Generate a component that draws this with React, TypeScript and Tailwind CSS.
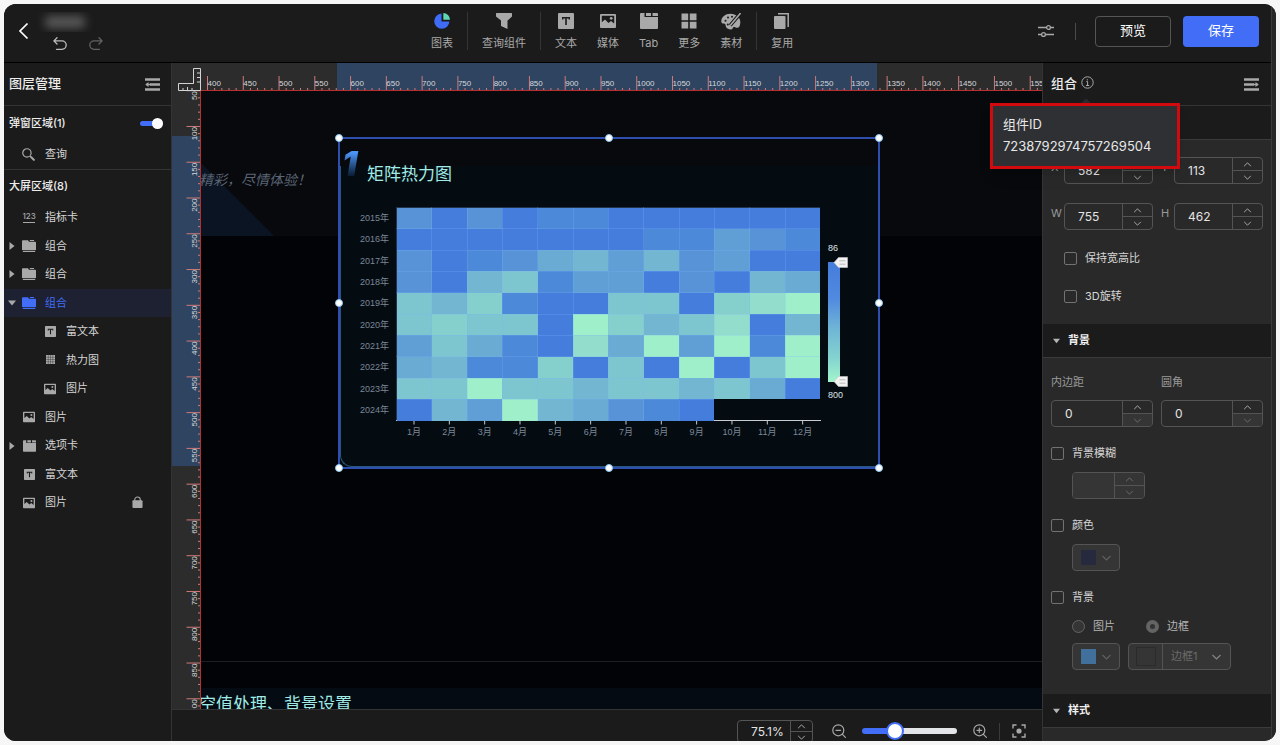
import React, { useState } from "react";
import clsx from "clsx";

type IconProps = { className?: string };

const TextIcon = ({ className }: IconProps) => (
  <svg viewBox="0 0 16 16" className={className} fill="currentColor" aria-hidden="true">
    <path fillRule="evenodd" d="M1 0h14a1 1 0 0 1 1 1v14a1 1 0 0 1-1 1H1a1 1 0 0 1-1-1V1a1 1 0 0 1 1-1Zm3 4v2.6h1.4V5.500h1.800V12h1.600V5.500h1.800v1.100H12V4Z" />
  </svg>
);

const PictureIcon = ({ className }: IconProps) => (
  <svg viewBox="0 0 16 16" className={className} fill="currentColor" aria-hidden="true">
    <path fillRule="evenodd" d="M1 1h14a1 1 0 0 1 1 1v12a1 1 0 0 1-1 1H1a1 1 0 0 1-1-1V2a1 1 0 0 1 1-1Zm.8 1.800v6.400L5 6.500l3.500 3.500L11 8l3.200 2.600V2.800Z" />
    <circle cx="11.200" cy="5.300" r="1.400" />
  </svg>
);

const TabIcon = ({ className }: IconProps) => (
  <svg viewBox="0 0 18 16" className={className} fill="currentColor" aria-hidden="true">
    <path d="M0 1a1 1 0 0 1 1-1h3.500v4H18v11a1 1 0 0 1-1 1H1a1 1 0 0 1-1-1ZM6 0h5v3H6Zm6.500 0H17a1 1 0 0 1 1 1v2h-5.500Z" />
  </svg>
);

const FolderIcon = ({ className }: IconProps) => (
  <svg viewBox="0 0 14 12" className={className} fill="currentColor" aria-hidden="true">
    <path d="M0 1a.8.8 0 0 1 .8-.8H6l1 1.600h6.200a.8.8 0 0 1 .8.8V10H0ZM7.500 0h4.500v1H8.200ZM.8 10.800h12.400V12H.8Z" />
  </svg>
);

const PieIcon = ({ className }: IconProps) => (
  <svg viewBox="0 0 16 16" className={className} aria-hidden="true">
    <path d="M7.500.6A7.600 7.600 0 1 0 15.400 8.500H7.500Z" fill="#3f6cf6" />
    <path d="M9.300 0A6.800 6.800 0 0 1 16 6.700H9.300Z" fill="#5fd6b4" />
  </svg>
);

const FunnelIcon = ({ className }: IconProps) => (
  <svg viewBox="0 0 16 16" className={className} fill="currentColor" aria-hidden="true">
    <path d="M.6 0h14.800a.6.6 0 0 1 .6.6v3L11.500 7.600V16L5 13V7.600L0 3.600v-3A.6.6 0 0 1 .6 0Z" />
  </svg>
);

const GridIcon = ({ className }: IconProps) => (
  <svg viewBox="0 0 16 16" className={className} fill="currentColor" aria-hidden="true">
    <path d="M.5.5h6.700v6.700H.5ZM8.800.5h6.700v6.700H8.800ZM.5 8.800h6.700v6.700H.5ZM8.800 8.800h6.700v6.700H8.800Z" />
  </svg>
);

const PaletteIcon = ({ className }: IconProps) => (
  <svg viewBox="0 0 20 17" className={className} aria-hidden="true">
    <path d="M9.500.8C4.300.8.3 4.100.3 8.400c0 1.900 1.200 2 2.500 2.100 1.700.1 1.700 1 1.900 2.500.3 2.200 2.600 3.600 5.300 3.600 1.700 0 1.500-1.600 2.300-2.300 1-.9 3.400 1.200 5.100.3 1.300-.8 1.900-3.200 1.900-5.600C19.300 4.500 15 .8 9.500.8Z" fill="currentColor" />
    <g fill="#1b1b1b">
      <circle cx="4.500" cy="7.800" r="1" /><circle cx="7" cy="4.600" r="1" />
      <circle cx="11" cy="3.800" r="1" /><circle cx="6.800" cy="11.600" r="1" />
    </g>
    <path d="M19.500.2 9.200 12.300" stroke="#1b1b1b" strokeWidth="3.600" />
    <path d="M19.500.2 9.200 12.400" stroke="currentColor" strokeWidth="1.600" fill="none" />
  </svg>
);

const CopyIcon = ({ className }: IconProps) => (
  <svg viewBox="0 0 16 16" className={className} aria-hidden="true">
    <rect x="0" y="3" width="11.500" height="13" rx="1" fill="currentColor" />
    <path d="M4 .8h10.200V14" fill="none" stroke="currentColor" strokeWidth="1.500" />
  </svg>
);

const UndoIcon = ({ className }: IconProps) => (
  <svg viewBox="0 0 14 14" className={className} fill="none" stroke="currentColor" strokeWidth="1.300" strokeLinecap="round" strokeLinejoin="round" aria-hidden="true">
    <path d="M4 .8.9 3.900 4 7M1 3.900h8a4.200 4.200 0 0 1 0 8.400H3.500" />
  </svg>
);

const SearchDocIcon = ({ className }: IconProps) => (
  <svg viewBox="0 0 14 14" className={className} fill="none" stroke="currentColor" strokeLinecap="round" aria-hidden="true">
    <circle cx="5.300" cy="5.300" r="4.500" strokeWidth="1.300" />
    <path d="m9 9 .6.6" strokeWidth="1.200" />
    <path d="m10 10 2.800 2.800" strokeWidth="2.200" />
  </svg>
);

const NumberIcon = ({ className }: IconProps) => (
  <span className={clsx(className, "flex flex-col items-center justify-center border-b border-[#a8a8a8] text-[8px] font-medium leading-[9px]")} aria-hidden="true">
    123
  </span>
);

const HeatIcon = ({ className }: IconProps) => (
  <svg viewBox="0 0 10 10" className={className} aria-hidden="true">
    <rect width="10" height="10" fill="currentColor" />
    <path d="M2.500 0v10M5 0v10M7.500 0v10M0 2.500h10M0 5h10M0 7.500h10" stroke="#1b1b1b" strokeWidth=".4" />
  </svg>
);

const LockIcon = ({ className }: IconProps) => (
  <svg viewBox="0 0 12 13" className={className} aria-hidden="true">
    <rect x=".5" y="4" width="11" height="8.500" rx="1" fill="currentColor" />
    <path d="M3 5V3.500a3 3 0 0 1 6 0V5" fill="none" stroke="currentColor" strokeWidth="1.200" />
  </svg>
);

const CollapseIcon = ({ className }: IconProps) => (
  <svg viewBox="0 0 15 13" className={className} aria-hidden="true">
    <path d="M0 1.500h15M5 6.500h10M0 11.500h15" stroke="currentColor" strokeWidth="2.400" />
    <path d="M1 6.500h5" stroke="currentColor" strokeWidth="1.400" />
    <path d="M3.500 4v5L.3 6.500Z" fill="currentColor" />
  </svg>
);

const Chevron = ({ className, up }: IconProps & { up?: boolean }) => (
  <svg viewBox="0 0 10 6" className={className} fill="none" stroke="currentColor" strokeWidth="1.200" aria-hidden="true">
    <path d={up ? "m1 5 4-4 4 4" : "m1 1 4 4 4-4"} />
  </svg>
);

const Triangle = ({ open, className }: IconProps & { open?: boolean }) => (
  <svg viewBox="0 0 8 8" className={className} fill="currentColor" aria-hidden="true">
    <path d={open ? "M0 1.500h8L4 6.500Z" : "M1.500 0v8l5-4Z"} />
  </svg>
);

const ZoomIcon = ({ className, plus }: IconProps & { plus?: boolean }) => (
  <svg viewBox="0 0 14 14" className={className} fill="none" stroke="currentColor" strokeWidth="1.200" strokeLinecap="round" aria-hidden="true">
    <circle cx="6.300" cy="6.300" r="5.500" />
    <path d={plus ? "M4 6.300h4.600M6.300 4v4.600M10.400 10.400l3 3" : "M4 6.300h4.600M10.400 10.400l3 3"} />
  </svg>
);

const FitIcon = ({ className }: IconProps) => (
  <svg viewBox="0 0 14 14" className={className} fill="none" stroke="currentColor" strokeWidth="1.400" aria-hidden="true">
    <path d="M1 4.500V1h3.500M9.500 1H13v3.500M13 9.500V13H9.500M4.500 13H1V9.500" />
    <circle cx="7" cy="7" r="2.600" fill="currentColor" stroke="none" />
  </svg>
);

/* ---------- header ---------- */

const toolGroups = [
  [{ label: "图表", Icon: PieIcon, size: "h-4 w-4" }],
  [{ label: "查询组件", Icon: FunnelIcon, size: "h-4 w-4" }],
  [
    { label: "文本", Icon: TextIcon, size: "h-4 w-4" },
    { label: "媒体", Icon: PictureIcon, size: "h-4 w-4" },
    { label: "Tab", Icon: TabIcon, size: "h-4 w-[18px]" },
    { label: "更多", Icon: GridIcon, size: "h-4 w-4" },
    { label: "素材", Icon: PaletteIcon, size: "h-[17px] w-5" },
  ],
  [{ label: "复用", Icon: CopyIcon, size: "h-4 w-4" }],
];

function Header() {
  return (
    <header className="flex h-[59px] shrink-0 items-start border-b border-black bg-[#1b1b1b]">
      <div className="flex w-[413px] shrink-0 items-start gap-2 pl-[14px] pt-2">
        <button aria-label="返回" className="mt-[10px] text-white">
          <svg viewBox="0 0 10 18" className="h-[18px] w-[11px]" fill="none" stroke="currentColor" strokeWidth="1.700">
            <path d="M9 1.500 1.500 9 9 16.500" />
          </svg>
        </button>
        <div className="flex flex-col gap-[5px]">
          <div className="h-5 w-20 overflow-hidden">
            <div className="ml-2 mt-1 h-3 w-10 rounded-sm bg-[#5a5a5a] blur-[5px]" />
          </div>
          <div className="flex gap-[22px] pl-4">
            <button aria-label="撤销" className="text-[#bdbdbd]"><UndoIcon className="h-[14px] w-[14px]" /></button>
            <button aria-label="重做" className="text-[#626262]"><UndoIcon className="h-[14px] w-[14px] -scale-x-100" /></button>
          </div>
        </div>
      </div>
      <nav className="flex pt-2">
        {toolGroups.map((group, i) => (
          <div key={i} className={clsx("flex h-[38px] gap-5 px-[14px]", i < toolGroups.length - 1 && "border-r border-[#353535]")}>
            {group.map(({ label, Icon, size }) => (
              <button key={label} className="flex flex-col items-center text-[11px] leading-[14px] text-[#a9a9a9]">
                <span className="mb-[6px] flex h-5 items-center justify-center"><Icon className={size} /></span>
                {label}
              </button>
            ))}
          </div>
        ))}
      </nav>
      <div className="ml-auto flex h-[54px] items-center pr-3">
        <button aria-label="设置" className="text-[#a9a9a9]">
          <svg viewBox="0 0 16 14" className="h-[14px] w-4" fill="none" stroke="currentColor" strokeWidth="1.300">
            <path d="M0 3.500h8.500M12.500 3.500H16M0 10.500h3.500M7.500 10.500H16" />
            <circle cx="10.500" cy="3.500" r="1.900" /><circle cx="5.500" cy="10.500" r="1.900" />
          </svg>
        </button>
        <span className="ml-[21px] h-[17px] w-px bg-[#4a4a4a]" />
        <button className="ml-[19px] h-[31px] w-[76px] rounded border border-[#555] text-[13px] text-white">预览</button>
        <button className="ml-3 h-[31px] w-[76px] rounded bg-[#426df7] text-[13px] text-white">保存</button>
      </div>
    </header>
  );
}

/* ---------- layer list ---------- */

type Layer = {
  label: string;
  Icon: (p: IconProps) => React.JSX.Element;
  size: string;
  arrow?: "open" | "closed";
  child?: boolean;
  active?: boolean;
  locked?: boolean;
};

const layers: Layer[] = [
  { label: "指标卡", Icon: NumberIcon, size: "h-[11px] w-3" },
  { label: "组合", Icon: FolderIcon, size: "h-3 w-[14px]", arrow: "closed" },
  { label: "组合", Icon: FolderIcon, size: "h-3 w-[14px]", arrow: "closed" },
  { label: "组合", Icon: FolderIcon, size: "h-3 w-[14px]", arrow: "open", active: true },
  { label: "富文本", Icon: TextIcon, size: "h-[11px] w-[11px]", child: true },
  { label: "热力图", Icon: HeatIcon, size: "h-[9px] w-[9px]", child: true },
  { label: "图片", Icon: PictureIcon, size: "h-3 w-3", child: true },
  { label: "图片", Icon: PictureIcon, size: "h-3 w-3" },
  { label: "选项卡", Icon: TabIcon, size: "h-3 w-[13px]", arrow: "closed" },
  { label: "富文本", Icon: TextIcon, size: "h-[11px] w-[11px]" },
  { label: "图片", Icon: PictureIcon, size: "h-3 w-3", locked: true },
];

function LayerPanel() {
  return (
    <aside className="w-[168px] shrink-0 border-r border-[#343434] bg-[#1b1b1b] text-[11px] text-[#d6d6d6]">
      <div className="flex h-[43px] items-center justify-between border-b border-[#343434] pl-[5px] pr-[11px]">
        <h2 className="text-[13px] font-medium text-[#ededed]">图层管理</h2>
        <button aria-label="收起" className="text-[#a9a9a9]"><CollapseIcon className="h-[13px] w-[15px]" /></button>
      </div>
      <div className="flex h-[34px] items-center justify-between pl-[5px] pr-2">
        <label htmlFor="popup" className="font-medium text-[#ededed]">弹窗区域(1)</label>
        <input
          id="popup"
          type="checkbox"
          role="switch"
          defaultChecked
          className="relative h-[5px] w-[23px] appearance-none rounded-full bg-[#426df7] before:absolute before:-top-[3px] before:right-0 before:h-[11px] before:w-[11px] before:rounded-full before:bg-white"
        />
      </div>
      <div className="flex h-[30px] items-center gap-[10px] border-b border-[#343434] pl-[18px]">
        <SearchDocIcon className="h-[13px] w-[13px] text-[#a9a9a9]" />查询
      </div>
      <div className="flex h-[33px] items-center pl-[5px] font-medium text-[#ededed]">大屏区域(8)</div>
      <ul className="grid h-[314px] auto-rows-fr">
        {layers.map(({ label, Icon, size, arrow, child, active, locked }, i) => (
          <li key={i} className={clsx("flex items-center", child ? "pl-[25px]" : "pl-1", active && "bg-[#1d2131] text-[#426df7]")}>
            <span className="flex w-[14px] items-center text-[#a9a9a9]">
              {arrow && <Triangle open={arrow === "open"} className="h-2 w-2" />}
            </span>
            <span className={clsx("mr-[9px] flex w-[14px] justify-center", active ? "text-[#426df7]" : "text-[#a9a9a9]")}>
              <Icon className={size} />
            </span>
            <span className="flex-1">{label}</span>
            {locked && <LockIcon className="mr-7 h-[13px] w-[11px] text-[#a9a9a9]" />}
          </li>
        ))}
      </ul>
    </aside>
  );
}

/* ---------- rulers ---------- */

const STEP = 35.77;

function HorizontalRuler() {
  return (
    <svg className="h-7 min-w-0 flex-1 bg-[#2c2c2c]" aria-hidden="true">
      <rect x="136" width="540" height="28" fill="#2f4460" />
      {Array.from({ length: 24 }, (_, i) => {
        const x = 6.500 + i * STEP;
        return (
          <g key={i} stroke="#d07a78">
            <path d={`M${x} 13v15`} />
            {[1, 2, 3, 4].map((n) => <path key={n} d={`M${x + (n * STEP) / 5} 25v3`} />)}
            <text x={x} y="23" fontSize="8" fill="#d4d7dc" stroke="none" fontFamily="Liberation Sans, sans-serif">{400 + i * 50}</text>
          </g>
        );
      })}
      <path d="M0 27.500h3000" stroke="#b5302f" />
    </svg>
  );
}

function VerticalRuler() {
  return (
    <svg className="h-full w-[29px] shrink-0 bg-[#2c2c2c]" aria-hidden="true">
      <rect y="45" width="29" height="330" fill="#2f4460" />
      {Array.from({ length: 18 }, (_, i) => {
        const y = -0.300 + i * STEP;
        return (
          <g key={i} stroke="#d07a78">
            <path d={`M14.500 ${y}h14.500`} />
            {[1, 2, 3, 4].map((n) => <path key={n} d={`M26 ${y + (n * STEP) / 5}h3`} />)}
            <text transform={`translate(25 ${y + 0.5}) rotate(-90)`} textAnchor="end" fontSize="8" fill="#d4d7dc" stroke="none" fontFamily="Liberation Sans, sans-serif">{50 + i * 50}</text>
          </g>
        );
      })}
      <path d="M28.500 0v3000" stroke="#b5302f" />
    </svg>
  );
}

/* ---------- heat map ---------- */

const scale = ["#457ddc", "#4d89d9", "#5893d7", "#5f9fd6", "#69abd3", "#72b6d1", "#7dc5cf", "#85d0cc", "#92ddcb", "#9eefca"];
const years = ["2015", "2016", "2017", "2018", "2019", "2020", "2021", "2022", "2023", "2024"];
const heat = [
  [2, 0, 2, 0, 1, 1, 0, 0, 0, 0, 0, 0],
  [0, 0, 0, 0, 0, 0, 0, 1, 1, 3, 2, 1],
  [2, 0, 1, 2, 4, 5, 3, 5, 2, 3, 0, 0],
  [2, 0, 5, 6, 1, 3, 3, 0, 2, 0, 5, 4],
  [6, 5, 7, 1, 0, 0, 6, 6, 0, 7, 8, 9],
  [6, 7, 6, 6, 0, 9, 7, 5, 6, 8, 0, 5],
  [3, 6, 4, 1, 0, 8, 4, 9, 3, 9, 1, 9],
  [4, 5, 1, 1, 7, 0, 6, 0, 9, 0, 6, 9],
  [6, 6, 9, 6, 6, 5, 6, 6, 5, 6, 4, 0],
  [0, 5, 3, 9, 5, 4, 2, 1, 0],
];
const CELL_W = 35.33;
const CELL_H = 21.33;

const Tag = ({ y }: { y: number }) => (
  <g transform={`translate(495 ${y})`}>
    <path d="M0 0 4.500-5H13.500V5H4.500Z" fill="#f2f2f2" stroke="#c8c8c8" strokeWidth=".6" />
    <path d="M5.500-1.700h6M5.500 1.700h6" stroke="#b4b4b4" strokeWidth=".9" />
  </g>
);

function HeatMap() {
  return (
    <svg viewBox="0 0 542 331" className="h-[331px] w-[542px]" role="img" aria-label="矩阵热力图" fontFamily="Liberation Sans, Noto Sans CJK SC, sans-serif" fontSize="9">
      <defs>
        <linearGradient id="heatScale" x1="0" y1="0" x2="0" y2="1">
          <stop offset="0" stopColor="#457ddc" />
          <stop offset=".3" stopColor="#5089df" />
          <stop offset=".55" stopColor="#6fb4d6" />
          <stop offset=".8" stopColor="#84d3d0" />
          <stop offset="1" stopColor="#a2f5cc" />
        </linearGradient>
      </defs>
      <path d="M57 282.500h425" stroke="#c8ccd0" />
      <g shapeRendering="crispEdges">
        {heat.map((row, r) =>
          row.map((v, c) => (
            <rect key={`${r}-${c}`} x={57.500 + c * CELL_W} y={69.500 + r * CELL_H} width={CELL_W} height={CELL_H} fill={scale[v]} />
          ))
        )}
        {heat.map((row, r) =>
          row.map((_, c) => (
            <path key={`${r}-${c}`} d={`M${57.500 + c * CELL_W} ${69.500 + (r + 1) * CELL_H}v${-CELL_H}h${CELL_W}`} fill="none" stroke="#7db4ff" strokeOpacity=".25" />
          ))
        )}
      </g>
      {years.map((y, r) => (
        <text key={y} x="50" y={83 + r * CELL_H} textAnchor="end" fill="#7c8797">{y}年</text>
      ))}
      {Array.from({ length: 12 }, (_, c) => (
        <g key={c}>
          <path d={`M${75 + c * CELL_W} 283v3.500`} stroke="#c8ccd0" />
          <text x={75 + c * CELL_W} y="297" textAnchor="middle" fill="#7c8797">{c + 1}月</text>
        </g>
      ))}
      <text x="489" y="113" fill="#dfe3e8">86</text>
      <rect x="489" y="124" width="12" height="120" fill="url(#heatScale)" />
      <Tag y={124.500} />
      <Tag y={243.500} />
      <text x="489" y="260" fill="#dfe3e8">800</text>
    </svg>
  );
}

const handles = [
  "-left-[3px] -top-[3px]", "left-1/2 -top-[3px] -ml-1", "-right-[3px] -top-[3px]",
  "-left-[3px] top-1/2 -mt-1", "-right-[3px] top-1/2 -mt-1",
  "-left-[3px] -bottom-[3px]", "left-1/2 -bottom-[3px] -ml-1", "-right-[3px] -bottom-[3px]",
];

function Canvas() {
  return (
    <main className="relative min-w-0 flex-1 overflow-hidden bg-[#020306]">
      <div className="absolute inset-x-0 top-0 h-[145px] bg-[#08090d]" />
      <svg className="absolute left-0 top-[72px] h-[73px] w-[73px]" viewBox="0 0 73 73" aria-hidden="true">
        <path d="M0 0 73 73H0Z" fill="#0a1422" />
      </svg>
      <p className="absolute -left-[2px] top-[79px] whitespace-nowrap text-[14px] italic leading-5 text-[#5a6474]">精彩，尽情体验！</p>
      <div className="absolute inset-x-0 top-[570px] border-t border-[#1d1e22]" />
      <div className="absolute inset-x-0 top-[597px] h-[60px] bg-[#040b13] pt-1">
        <p className="-ml-[2px] whitespace-nowrap text-[17px] leading-6 text-[#a1ebe6]">空值处理、背景设置</p>
      </div>
      <section className="absolute left-[137px] top-[46px] h-[332px] w-[542px] bg-[#08090c]">
        <div className="absolute inset-x-0.5 bottom-0.5 top-[29px] rounded-bl-xl border-b border-l border-[#27587c] bg-[#040b11]" />
        <span className="absolute left-1 top-[9px] bg-gradient-to-b from-[#4b93f5] from-20% to-[#0a1a30] to-85% bg-clip-text pr-2 text-[34px] font-black italic leading-9 text-transparent">1</span>
        <h3 className="absolute left-[29px] top-[25px] text-[17px] leading-6 text-[#a1ebe6]">矩阵热力图</h3>
        <div className="absolute left-px top-px"><HeatMap /></div>
        <div className="absolute inset-0 border-2 border-[#2f4fae]" />
        {handles.map((pos) => (
          <span key={pos} className={clsx("absolute h-2 w-2 rounded-full border border-[#8cc4f0] bg-white", pos)} />
        ))}
      </section>
    </main>
  );
}

/* ---------- property controls ---------- */

type StepperProps = {
  label: string;
  value: string;
  className?: string;
  disabled?: boolean;
  atMin?: boolean;
  compact?: boolean;
};

function Stepper({ label, value, className, disabled, atMin, compact }: StepperProps) {
  const [text, setText] = useState(value);
  return (
    <div className={clsx("flex overflow-hidden rounded border border-[#545454]", className)}>
      <input
        aria-label={label}
        value={text}
        disabled={disabled}
        onChange={(e) => setText(e.target.value)}
        className={clsx("w-0 min-w-0 flex-1 pl-[13px] text-[12px] text-[#e4e4e4] outline-none", disabled ? "bg-[#353535]" : "bg-transparent")}
      />
      <div className={clsx("flex shrink-0 flex-col divide-y divide-[#545454] border-l border-[#545454]", compact ? "w-[22px]" : "w-[30px]")}>
        <button aria-label={`${label} 增加`} disabled={disabled} className={clsx("flex flex-1 items-center justify-center", disabled ? "bg-[#353535] text-[#6b6b6b]" : "text-[#a9a9a9]")}>
          <Chevron up className="h-[5px] w-[9px]" />
        </button>
        <button aria-label={`${label} 减少`} disabled={disabled || atMin} className={clsx("flex flex-1 items-center justify-center", disabled || atMin ? "bg-[#353535] text-[#6b6b6b]" : "text-[#a9a9a9]")}>
          <Chevron className="h-[5px] w-[9px]" />
        </button>
      </div>
    </div>
  );
}

function Check({ label, className }: { label: string; className?: string }) {
  return (
    <label className={clsx("flex h-4 items-center gap-2", className)}>
      <input type="checkbox" className="h-[13px] w-[13px] appearance-none rounded-[2px] border border-[#727272]" />
      {label}
    </label>
  );
}

const SectionTitle = ({ children }: { children?: React.ReactNode }) => (
  <h3 className="border-b border-[#3a3a3a] bg-[#1b1b1b] font-bold text-[#f0f0f0]">
    <button className="flex h-[33px] w-full items-center gap-2 pl-[10px]">
      <Triangle open className="h-2 w-[7px] text-[#b5b5b5]" />
      {children}
    </button>
  </h3>
);

const Swatch = ({ color, label }: { color: string; label: string }) => (
  <button aria-label={label} className="flex h-[27px] w-[48px] items-center gap-[5px] rounded border border-[#545454] bg-[#353535] pl-2 text-[#5f5f5f]">
    <span className={clsx("h-[15px] w-[15px]", color)} />
    <Chevron className="h-[6px] w-[11px]" />
  </button>
);

function PropertyPanel() {
  return (
    <aside className="w-[229px] shrink-0 border-l border-[#343434] bg-[#292929] text-[11px] text-[#d6d6d6]">
      <div className="relative flex h-[43px] items-center border-b border-[#343434] bg-[#1b1b1b] pl-2 pr-3">
        <h2 className="text-[13px] font-medium text-[#ededed]">组合</h2>
        <button aria-label="组件信息" className="ml-1 text-[#a9a9a9]">
          <svg viewBox="0 0 13 13" className="mb-1 h-[13px] w-[13px]" fill="none" stroke="currentColor">
            <circle cx="6.500" cy="6.500" r="5.700" />
            <path d="M5.300 5.500h1.300v4M5 9.500h3.200M6.300 3.200v1.200" />
          </svg>
        </button>
        <button aria-label="收起" className="ml-auto text-[#a9a9a9]"><CollapseIcon className="h-[13px] w-[15px] -scale-x-100" /></button>
        <div className="absolute left-[39px] top-[37px] h-2 w-2 rotate-45 bg-[#2a2c30]" />
        <div role="tooltip" className="absolute -left-[53px] top-10 z-10 h-[66px] w-[190px] border-[3px] border-[#d20a0d] bg-[#2e3033] pl-[10px] pt-[7px] text-[13px] leading-[22px] text-[#e8e8e8] shadow-lg">
          组件ID
          <br />
          7238792974757269504
        </div>
      </div>
      <SectionTitle />
      <div className="flex flex-col px-2 pb-5 pt-[17px]">
        <div className="grid grid-cols-[13px_89px_21px_89px] gap-y-[19px] text-[#9a9a9a]">
          <span className="pt-0.5">X</span><Stepper label="X" value="582" className="h-[27px]" />
          <span className="pl-2 pt-0.5">Y</span><Stepper label="Y" value="113" className="h-[27px]" />
          <span className="pt-0.5">W</span><Stepper label="W" value="755" className="h-[27px]" />
          <span className="pl-2 pt-0.5">H</span><Stepper label="H" value="462" className="h-[27px]" />
        </div>
        <Check label="保持宽高比" className="mt-5 pl-[13px]" />
        <Check label="3D旋转" className="mt-[22px] pl-[13px]" />
      </div>
      <SectionTitle>背景</SectionTitle>
      <div className="flex flex-col px-2 pb-6 pt-[15px]">
        <div className="grid grid-cols-2 gap-x-2 text-[#9a9a9a]">
          <div className="flex flex-col gap-[9px]"><span className="leading-[18px]">内边距</span><Stepper label="内边距" value="0" atMin className="h-[27px]" /></div>
          <div className="flex flex-col gap-[9px]"><span className="leading-[18px]">圆角</span><Stepper label="圆角" value="0" atMin className="h-[27px]" /></div>
        </div>
        <Check label="背景模糊" className="mt-[18px]" />
        <Stepper label="背景模糊" value="" disabled className="ml-[21px] mt-[11px] h-[27px] w-[73px]" />
        <Check label="颜色" className="mt-[18px]" />
        <div className="ml-[21px] mt-[11px]"><Swatch label="颜色" color="bg-[#27293f]" /></div>
        <Check label="背景" className="mt-[18px]" />
        <div className="ml-[21px] mt-[13px] flex h-4 items-center text-[#b4b4b4]">
          <label className="flex w-[74px] items-center gap-2">
            <input type="radio" name="bg" disabled className="h-[13px] w-[13px] appearance-none rounded-full border border-[#646464] bg-[#353535]" />图片
          </label>
          <label className="flex items-center gap-2">
            <input type="radio" name="bg" disabled defaultChecked className="h-[13px] w-[13px] appearance-none rounded-full border-[4px] border-[#646464] bg-[#333]" />边框
          </label>
        </div>
        <div className="ml-[21px] mt-[9px] flex gap-2">
          <Swatch label="背景图片" color="bg-[#42709c]" />
          <div className="flex h-[27px] w-[103px] rounded border border-[#545454] bg-[#353535] text-[#6b6b6b]">
            <span className="flex w-[34px] items-center justify-center border-r border-[#545454]">
              <span className="h-[19px] w-5 border border-[#2b2b2b]" />
            </span>
            <span className="relative flex flex-1 items-center">
              <select aria-label="边框" disabled className="w-full appearance-none pl-2 text-[#6b6b6b]"><option>边框1</option></select>
              <Chevron className="absolute right-2 h-[6px] w-[11px] text-[#858585]" />
            </span>
          </div>
        </div>
      </div>
      <SectionTitle>样式</SectionTitle>
    </aside>
  );
}

/* ---------- zoom bar ---------- */

function ZoomBar() {
  return (
    <footer className="flex h-8 shrink-0 items-start justify-end overflow-hidden border-t border-[#343434] bg-[#1b1b1b] pr-4 pt-[10px] text-[#a9a9a9]">
      <Stepper label="缩放比例" value="75.1%" compact className="h-[23px] w-[76px] shrink-0" />
      <div className="flex h-[22px] items-center">
        <button aria-label="缩小" className="ml-[19px] mr-4"><ZoomIcon className="h-[14px] w-[14px]" /></button>
        <input
          aria-label="缩放"
          type="range"
          defaultValue={31}
          className="h-[6px] w-[95px] appearance-none rounded-full bg-[linear-gradient(to_right,#426df7_35%,#e2e4e8_35%)] [&::-webkit-slider-thumb]:h-[18px] [&::-webkit-slider-thumb]:w-[18px] [&::-webkit-slider-thumb]:appearance-none [&::-webkit-slider-thumb]:rounded-full [&::-webkit-slider-thumb]:border-2 [&::-webkit-slider-thumb]:border-[#426df7] [&::-webkit-slider-thumb]:bg-white"
        />
        <button aria-label="放大" className="ml-4"><ZoomIcon plus className="h-[14px] w-[14px]" /></button>
        <span className="mx-3 h-[17px] w-px bg-[#3a3a3a]" />
        <button aria-label="适应画布"><FitIcon className="h-[14px] w-[14px]" /></button>
      </div>
    </footer>
  );
}

export default function App() {
  return (
    <div className="h-screen bg-[#f6f6f6] p-1 font-['Inter','Noto_Sans_CJK_SC',sans-serif]">
      <div className="flex h-full overflow-hidden rounded-xl bg-[#1b1b1b]">
        <div className="flex min-w-0 flex-1 flex-col">
          <Header />
          <div className="flex min-h-0 flex-1">
            <LayerPanel />
            <div className="flex min-w-0 flex-1 flex-col">
              <div className="flex">
                <svg viewBox="0 0 29 28" className="h-7 w-[29px] shrink-0 bg-[#2c2c2c]" fill="none" stroke="#d4d4d4" aria-hidden="true">
                  <path d="M21.500 5.500h7v22h-22v-7h15ZM25 10h3M25 14.500h3M25 19h3M11 25v2M15.500 24v3M20 25v2" />
                </svg>
                <HorizontalRuler />
              </div>
              <div className="flex min-h-0 flex-1">
                <VerticalRuler />
                <Canvas />
              </div>
              <ZoomBar />
            </div>
            <PropertyPanel />
          </div>
        </div>
        <div className="w-[5px] shrink-0 border-l border-[#3a3a3a] bg-[#262626]" />
      </div>
    </div>
  );
}
